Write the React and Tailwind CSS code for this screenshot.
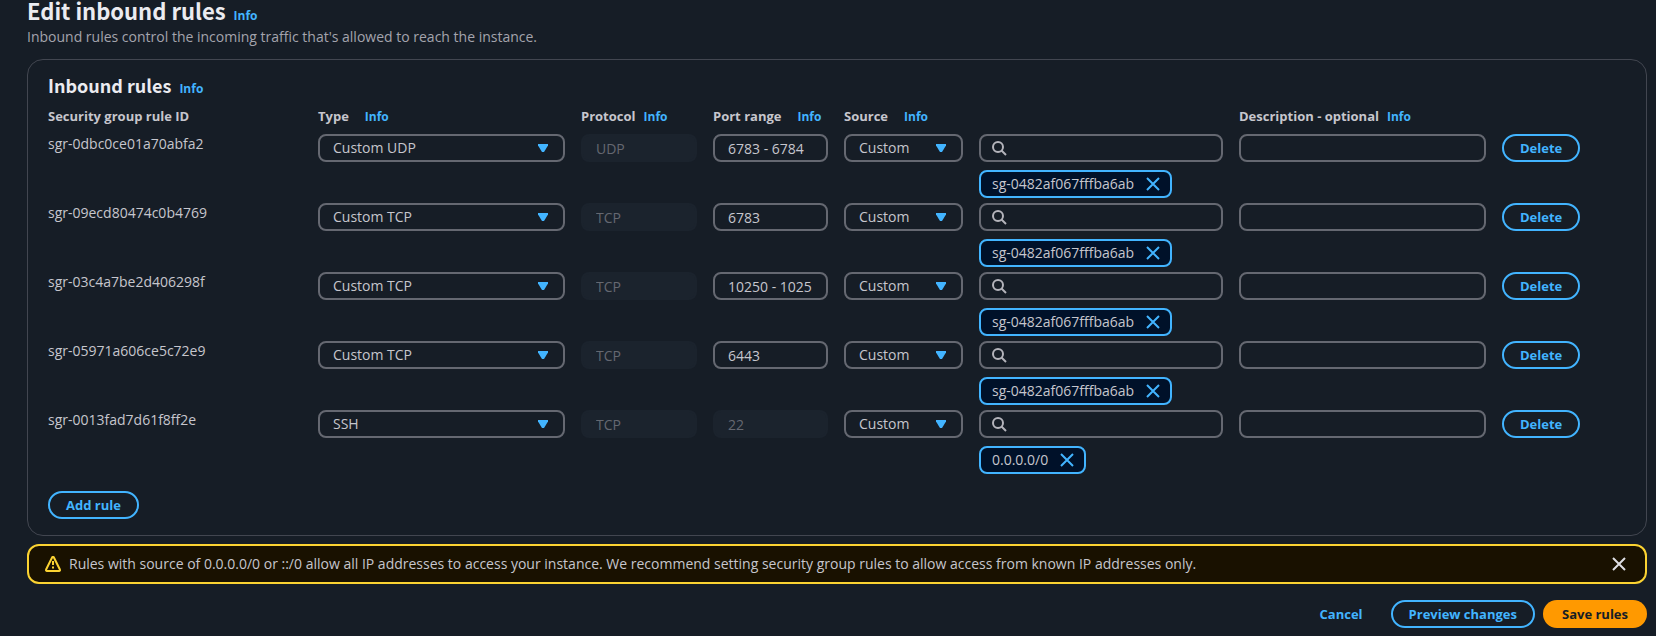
import React from "react";

const rules = [
  { id: "sgr-0dbc0ce01a70abfa2", type: "Custom UDP", protocol: "UDP", port: "6783 - 6784", source: "sg-0482af067fffba6ab" },
  { id: "sgr-09ecd80474c0b4769", type: "Custom TCP", protocol: "TCP", port: "6783", source: "sg-0482af067fffba6ab" },
  { id: "sgr-03c4a7be2d406298f", type: "Custom TCP", protocol: "TCP", port: "10250 - 1025", source: "sg-0482af067fffba6ab" },
  { id: "sgr-05971a606ce5c72e9", type: "Custom TCP", protocol: "TCP", port: "6443", source: "sg-0482af067fffba6ab" },
  { id: "sgr-0013fad7d61f8ff2e", type: "SSH", protocol: "TCP", port: "22", portLocked: true, source: "0.0.0.0/0" },
];

function Info() {
  return (
    <a href="#info" className="text-xs font-bold text-[#42b4ff]">
      Info
    </a>
  );
}

function CloseIcon() {
  return (
    <svg viewBox="0 0 16 16" className="size-4" fill="none" stroke="currentColor" strokeWidth="2" aria-hidden="true">
      <path d="m2 2 12 12M14 2 2 14" />
    </svg>
  );
}

function SelectBox({ label, value, options }) {
  return (
    <div className="relative">
      <select
        aria-label={label}
        defaultValue={value}
        className="block h-7 w-full appearance-none rounded-lg border-2 border-[#656871] bg-[#161d26] pr-8 pl-[13px] text-[#c6c6cd]"
      >
        {options.map((option) => (
          <option key={option}>{option}</option>
        ))}
      </select>
      <svg
        viewBox="0 0 16 16"
        className="pointer-events-none absolute top-1.5 right-3.5 size-4 text-[#42b4ff]"
        fill="currentColor"
        aria-hidden="true"
      >
        <path d="M3 4h10v1.500L9 12H7L3 5.500z" />
      </svg>
    </div>
  );
}

function TextBox({ label, value, disabled }) {
  return (
    <input
      type="text"
      aria-label={label}
      defaultValue={value}
      disabled={disabled}
      className="block h-7 w-full rounded-lg border-2 border-[#656871] bg-[#161d26] px-[13px] text-[#c6c6cd] disabled:border-[#1b232d] disabled:bg-[#1b232d] disabled:text-[#656871]"
    />
  );
}

function OutlineButton({ children }) {
  return (
    <button type="button" className="h-7 rounded-full border-2 border-[#42b4ff] px-4 text-[13px] font-bold text-[#42b4ff]">
      {children}
    </button>
  );
}

function RuleRow({ rule }) {
  return (
    <tr className="align-top">
      <td>{rule.id}</td>
      <td className="pr-4">
        <SelectBox label="Type" value={rule.type} options={["Custom TCP", "Custom UDP", "SSH"]} />
      </td>
      <td className="pr-4">
        <TextBox label="Protocol" value={rule.protocol} disabled />
      </td>
      <td className="pr-4">
        <TextBox label="Port range" value={rule.port} disabled={rule.portLocked} />
      </td>
      <td className="pr-4">
        <SelectBox label="Source" value="Custom" options={["Custom", "Anywhere-IPv4", "My IP"]} />
      </td>
      <td className="pr-4 pb-[5px]">
        <div className="relative">
          <input
            type="search"
            aria-label="Search sources"
            className="block h-7 w-full rounded-lg border-2 border-[#656871] bg-[#161d26] pr-3 pl-9"
          />
          <svg
            viewBox="0 0 16 16"
            className="pointer-events-none absolute top-1.5 left-3 size-4 text-[#b4b4bb]"
            fill="none"
            stroke="currentColor"
            strokeWidth="2"
            aria-hidden="true"
          >
            <circle cx="7" cy="7" r="5" />
            <path d="m15 15-4.5-4.5" />
          </svg>
        </div>
        <div className="mt-2 flex">
          <span className="flex h-7 items-center gap-[11px] rounded-lg border-2 border-[#42b4ff] bg-[#001129] pr-[9px] pl-[11px] whitespace-nowrap">
            {rule.source}
            <button type="button" aria-label={"Remove " + rule.source} className="text-[#42b4ff]">
              <CloseIcon />
            </button>
          </span>
        </div>
      </td>
      <td className="pr-4">
        <TextBox label="Description" value="" />
      </td>
      <td>
        <OutlineButton>Delete</OutlineButton>
      </td>
    </tr>
  );
}

export default function App() {
  return (
    <main className="min-h-screen bg-[#161d26] pr-[9px] pb-2 pl-[27px] font-['Open_Sans',sans-serif] text-sm leading-5 text-[#c6c6cd]">
      <header>
        <div className="flex h-[22px] items-baseline gap-2">
          <h1 className="font-['Noto_Sans_CJK_SC',sans-serif] text-[22px] leading-5 font-bold text-[#ebebf0]">Edit inbound rules</h1>
          <Info />
        </div>
        <p className="mt-[5px] text-[#a4a4ad]">Inbound rules control the incoming traffic that's allowed to reach the instance.</p>
      </header>

      <section className="mt-3 rounded-2xl border border-[#424650] px-5 pt-3.5 pb-4">
        <div className="flex h-6 items-baseline gap-2">
          <h2 className="font-['Noto_Sans_CJK_SC',sans-serif] text-lg leading-[22px] font-bold text-[#ebebf0]">Inbound rules</h2>
          <Info />
        </div>
        <table className="mt-2 w-full table-fixed border-collapse text-left">
          <colgroup>
            <col className="w-[270px]" />
            <col className="w-[263px]" />
            <col className="w-[132px]" />
            <col className="w-[131px]" />
            <col className="w-[135px]" />
            <col className="w-[260px]" />
            <col className="w-[263px]" />
            <col className="w-[124px]" />
          </colgroup>
          <thead>
            <tr className="text-[13px] whitespace-nowrap">
              <th className="pb-2">Security group rule ID</th>
              <th className="pb-2">
                <span className="mr-4">Type</span>
                <Info />
              </th>
              <th className="pb-2">
                <span className="mr-2">Protocol</span>
                <Info />
              </th>
              <th className="pb-2">
                <span className="mr-4">Port range</span>
                <Info />
              </th>
              <th className="pb-2" colSpan={2}>
                <span className="mr-4">Source</span>
                <Info />
              </th>
              <th className="pb-2">
                <span className="mr-2">Description - optional</span>
                <Info />
              </th>
              <td />
            </tr>
          </thead>
          <tbody>
            {rules.map((rule) => (
              <RuleRow key={rule.id} rule={rule} />
            ))}
          </tbody>
        </table>
        <div className="mt-3">
          <OutlineButton>Add rule</OutlineButton>
        </div>
      </section>

      <div role="alert" className="mt-2 flex h-10 items-center gap-2 rounded-xl border-2 border-[#fbd332] bg-[#191100] px-4">
        <svg viewBox="0 0 16 16" className="size-4 shrink-0 text-[#fbd332]" fill="none" stroke="currentColor" strokeWidth="2" strokeLinejoin="round" aria-hidden="true">
          <path d="M7.1 1.500a1 1 0 0 1 1.800 0l6 12a1 1 0 0 1-.9 1.500H2a1 1 0 0 1-.9-1.500z" />
          <path d="M8 5v4M8 10.500v2" />
        </svg>
        <p className="flex-1">
          Rules with source of 0.0.0.0/0 or ::/0 allow all IP addresses to access your instance. We recommend setting security group rules to allow access from
          known IP addresses only.
        </p>
        <button type="button" aria-label="Dismiss" className="mr-0.5 text-[#dedee3]">
          <CloseIcon />
        </button>
      </div>

      <footer className="mt-4 flex items-center justify-end gap-2 text-[13px] font-bold">
        <button type="button" className="h-7 px-5 text-[#42b4ff]">
          Cancel
        </button>
        <OutlineButton>Preview changes</OutlineButton>
        <button type="button" className="h-7 rounded-full bg-[#ff9900] px-[19px] text-[#161d26]">
          Save rules
        </button>
      </footer>
    </main>
  );
}
